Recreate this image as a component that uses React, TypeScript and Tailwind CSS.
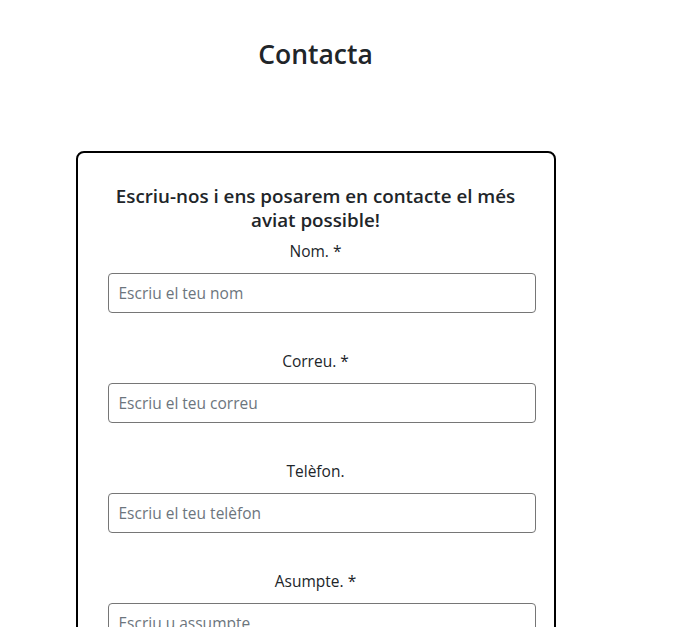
import React from 'react';

const fields = [
  { label: 'Nom. *', placeholder: 'Escriu el teu nom' },
  { label: 'Correu. *', placeholder: 'Escriu el teu correu' },
  { label: 'Telèfon.', placeholder: 'Escriu el teu telèfon' },
  { label: 'Asumpte. *', placeholder: 'Escriu u assumpte' },
  { label: 'Missatge. *', placeholder: 'Escriu el teu missatge' },
];

export default function App() {
  return (
    <div className="h-[627px] overflow-hidden bg-white text-[#212529] font-['Open_Sans',sans-serif]">
      <div className="w-[631px] flex flex-col items-center">
        <h2 className="mt-[38px] text-[26.5px] leading-[1.25] font-semibold">Contacta</h2>
        <div className="mt-[80px] w-[480px] border-2 border-black rounded-lg px-[30px] pt-[31px] pb-8">
          <form className="flex flex-col">
            <h5 className="text-[18.8px] leading-[24px] font-semibold text-center mb-[7px]">
              Escriu-nos i ens posarem en contacte el més aviat possible!
            </h5>
            {fields.map((f) => (
              <div key={f.label} className="flex flex-col mb-[36px]">
                <label className="text-center text-[15.5px] leading-[24px] mb-[10px]">{f.label}</label>
                <input
                  type="text"
                  placeholder={f.placeholder}
                  className="h-[40px] w-[428px] px-[10px] text-[15.5px] border border-[#767676] rounded-[4px] placeholder:text-[#6c757d] outline-none"
                />
              </div>
            ))}
          </form>
        </div>
      </div>
    </div>
  );
}
